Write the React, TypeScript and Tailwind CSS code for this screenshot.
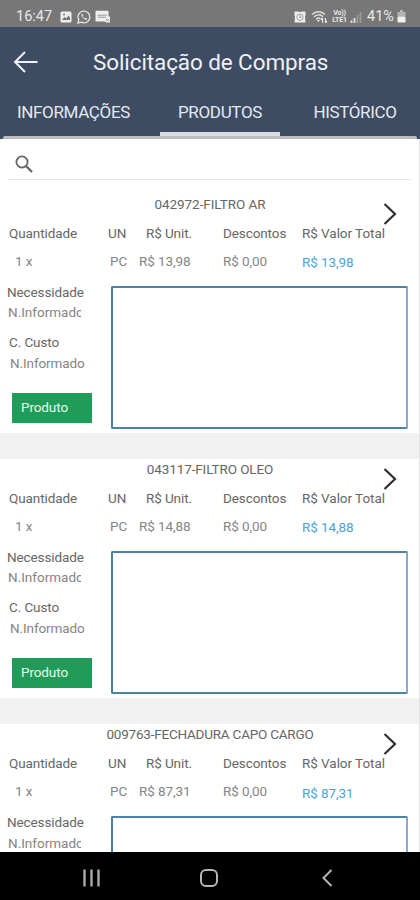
import { ReactNode } from "react";
import clsx from "clsx";

interface Item {
    code: string;
    price: string;
    titleClass: string;
}

const items: Item[] = [
    { code: "042972-FILTRO AR", price: "R$ 13,98", titleClass: "tracking-[-0.05px]" },
    { code: "043117-FILTRO OLEO", price: "R$ 14,88", titleClass: "tracking-[-0.1px]" },
    { code: "009763-FECHADURA CAPO CARGO", price: "R$ 87,31", titleClass: "tracking-[-0.22px]" },
];

function StatusBar() {
    return (
        <div className="flex h-[27px] shrink-0 items-center bg-[#777777] pt-[6px] pl-[16px] text-[#e9e9e9]">
            <span className="w-[44px] pt-[2px] text-[14.5px] leading-none">16:47</span>
            {/* Gallery */}
            <svg className="h-[12px] w-[12px]" viewBox="0 0 12 12">
                <rect x="0.5" y="0.5" width="11" height="11" rx="1.5" fill="#eeeeee" />
                <path d="M2 9 L4.5 5.8 L6.2 7.6 L8.6 4.6 L10 6.5 V9 Z" fill="#777777" />
                <circle cx="4" cy="3.6" r="1" fill="#777777" />
            </svg>
            {/* WhatsApp */}
            <svg className="ml-[5px] h-[14px] w-[14px]" viewBox="0 0 14 14" fill="none">
                <path
                    d="M0.9 13.1 L1.8 9.9 A5.9 5.9 0 1 1 4.2 12.2 Z"
                    stroke="#e6e6e6"
                    strokeWidth="1.3"
                />
                <path
                    d="M4.6 4 C4 6.8 7.2 10.2 10 9.6 L9.9 8.3 L8.4 7.7 L7.7 8.4 C6.8 8 6 7.2 5.6 6.3 L6.3 5.6 L5.7 4 Z"
                    fill="#e6e6e6"
                />
            </svg>
            {/* Message */}
            <svg className="ml-[4px] h-[13px] w-[16px]" viewBox="0 0 16 13">
                <path d="M0.5 0.8 H13.5 V6.5 H15 V12.5 H11 L10 11.5 H0.5 Z" fill="#eeeeee" />
                <path d="M2.5 5.2 H12 M3 7.2 H11" stroke="#999999" strokeWidth="1" />
                <path d="M11 9 L12.6 10.8 L14 9.2" stroke="#888888" fill="none" />
            </svg>
            <div className="ml-auto flex items-center pr-[14px]">
                {/* Alarm */}
                <svg className="h-[12px] w-[12px]" viewBox="0 0 12 12">
                    <path
                        d="M0.5 0.5 H3.5 L6 1 L8.5 0.5 H11.5 V4 L11 6 L11.5 11.5 H0.5 L1 6 L0.5 4 Z"
                        fill="#eeeeee"
                    />
                    <circle cx="6" cy="6.2" r="3.2" fill="none" stroke="#999999" strokeWidth="0.9" />
                    <path d="M6 4.3 V6.4 H7.5" stroke="#888888" fill="none" />
                </svg>
                {/* Wifi */}
                <svg className="ml-[5px] h-[14px] w-[17px]" viewBox="0 0 17 14" fill="none">
                    <path
                        d="M1 4.5 C4.5 0.8 10.5 0.8 14 4.5 M3 7 C5.7 4.2 9.5 4.2 12 6.8 M5.2 9.2 C6.6 7.8 8.2 7.8 9.5 9"
                        stroke="#dddddd"
                        strokeWidth="1.5"
                    />
                    <path d="M7.4 12 L5.8 10 H9 Z" fill="#eeeeee" />
                    <path
                        d="M11.5 12.8 V8 M10 9.6 L11.5 8 M14.5 8 V12.8 M16 11.2 L14.5 12.8"
                        stroke="#eeeeee"
                        strokeWidth="1.2"
                    />
                </svg>
                <span className="ml-[3px] w-[17px] text-center text-[7px] leading-[7px] font-bold tracking-[-0.2px]">
                    Vo))
                    <br />
                    LTE1
                </span>
                {/* Signal */}
                <svg className="ml-[2px] h-[12px] w-[12px]" viewBox="0 0 12 12">
                    <path d="M1.5 9.5 V12 M4.5 7 V12" stroke="#e0e0e0" strokeWidth="1.8" />
                    <path d="M7.5 4 V12 M10.5 1 V12" stroke="#9a9a9a" strokeWidth="1.8" />
                </svg>
                <span className="ml-[5px] w-[28px] pt-[2px] text-[14.5px] leading-none">41%</span>
                {/* Battery */}
                <svg className="ml-[2px] h-[13px] w-[9px]" viewBox="0 0 9 13">
                    <path d="M3 0 H6 V2 H8.5 V6.5 H0.5 V2 H3 Z" fill="#b4b4b4" />
                    <rect x="0.5" y="6.5" width="8" height="6" rx="1" fill="#f2f2f2" />
                </svg>
            </div>
        </div>
    );
}

function Tab({ children, className }: { children: ReactNode; className: string }) {
    return (
        <button
            type="button"
            className={clsx(
                "flex h-[50px] shrink-0 items-center justify-center border-b-[4px] pt-[7px] text-[17px] tracking-[-0.35px] whitespace-nowrap text-[#e4e9ef]",
                className
            )}
        >
            {children}
        </button>
    );
}

function Header() {
    return (
        <div className="h-[112px] shrink-0 bg-[#3d4c63]">
            <div className="flex h-[59px] items-center pt-[11px] pl-[13px]">
                <svg className="h-[24px] w-[26px]" viewBox="0 0 26 24" fill="none">
                    <path d="M24.5 12 H2 M12 2 L2 12 L12 22" stroke="#eef1f5" strokeWidth="2" />
                </svg>
                <h1 className="ml-[54px] text-[22.5px] leading-none tracking-[-0.1px] whitespace-nowrap text-[#eef1f5]">
                    Solicitação de Compras
                </h1>
            </div>
            <div className="flex">
                <Tab className="w-[147px] border-transparent">INFORMAÇÕES</Tab>
                <Tab className="ml-[13px] w-[120px] border-[#d5dce2]">PRODUTOS</Tab>
                <Tab className="ml-[10px] w-[130px] border-transparent">HISTÓRICO</Tab>
            </div>
            <div className="mx-[3px] h-[3px] rounded-t-[2px] bg-[#b9bdbf]" />
        </div>
    );
}

function Search() {
    return (
        <div className="h-[54.5px] shrink-0">
            <div className="mx-[8px] flex h-[41px] items-center border-b border-[#e8e8e8] pt-[9px] pl-[7px]">
                <svg className="h-[18px] w-[18px]" viewBox="0 0 18 18" fill="none" stroke="#666666">
                    <circle cx="7" cy="7" r="5.6" strokeWidth="1.8" />
                    <path d="M11 11 L17 17" strokeWidth="2.3" />
                </svg>
            </div>
        </div>
    );
}

function ItemCard({ item }: { item: Item }) {
    return (
        <div className="h-[265.4px] shrink-0">
            <div className="relative flex h-[30px] justify-center pt-[2px] pl-[1px]">
                <h2 className={clsx("text-[13.5px] leading-[17px] text-[#666666]", item.titleClass)}>
                    {item.code}
                </h2>
                <svg
                    className="absolute top-[8px] right-[21px] h-[24px] w-[16px]"
                    viewBox="0 0 16 24"
                    fill="none"
                >
                    <path d="M2.5 2 L13 12 L2.5 22" stroke="#2e2e2e" strokeWidth="2.2" />
                </svg>
            </div>

            <div className="flex h-[62px] pt-[1px] text-[13.5px] leading-[17px] tracking-[-0.1px] whitespace-nowrap text-[#666666]">
                <div className="w-[108px] pl-[9px]">
                    <div>Quantidade</div>
                    <div className="mt-[11px] pl-[6px] text-[#858585]">1 x</div>
                </div>
                <div className="w-[31px]">
                    <div>UN</div>
                    <div className="mt-[11px] pl-[2px] text-[#858585]">PC</div>
                </div>
                <div className="w-[84px]">
                    <div className="pl-[7px]">R$ Unit.</div>
                    <div className="mt-[11px] text-[#858585]">{item.price}</div>
                </div>
                <div className="w-[79px]">
                    <div>Descontos</div>
                    <div className="mt-[11px] text-[#858585]">R$ 0,00</div>
                </div>
                <div>
                    <div className="tracking-[-0.05px]">R$ Valor Total</div>
                    <div className="mt-[12.5px] text-[#4ba3dc]">{item.price}</div>
                </div>
            </div>

            <div className="flex h-[147.5px]">
                <div className="w-[111px] pl-[7px] text-[13.5px] leading-[17px] tracking-[-0.1px] text-[#666666]">
                    <div className="mt-[-2px]">Necessidade</div>
                    <div className="mt-[3.5px] w-[74px] overflow-hidden pl-[1px] tracking-normal whitespace-nowrap text-[#858585]">
                        N.Informado
                    </div>
                    <div className="mt-[13px] pl-[2px]">C. Custo</div>
                    <div className="mt-[3.5px] pl-[3px] text-[#858585]">N.Informado</div>
                    <button
                        type="button"
                        className="mt-[21px] ml-[5px] flex h-[30px] w-[80px] items-center bg-[#1f9d58] pl-[9px] text-[13.5px] text-[#e8f7ee]"
                    >
                        Produto
                    </button>
                </div>
                <div className="h-[143px] w-[297px] rounded-[2px] border-2 border-[#4d81a6] border-r-[#8aa8cc]" />
            </div>

            <div className="h-[25.9px] bg-[#f1f1f1]" />
        </div>
    );
}

function NavBar() {
    return (
        <div className="flex h-[48px] shrink-0 items-center bg-black pt-[3px] pl-[83px]">
            <svg className="h-[18px] w-[18px]" viewBox="0 0 18 18">
                <path d="M1.5 0.5 V17.5 M8.5 0.5 V17.5 M15.5 0.5 V17.5" stroke="#a8a8a8" strokeWidth="2.4" />
            </svg>
            <svg className="ml-[98px] h-[20px] w-[20px]" viewBox="0 0 20 20">
                <rect x="2" y="2" width="16" height="16" rx="5" fill="none" stroke="#b5b5b5" strokeWidth="2" />
            </svg>
            <svg className="ml-[102px] h-[20px] w-[12px]" viewBox="0 0 12 20">
                <path d="M10.5 2 L2.5 10 L10.5 18" fill="none" stroke="#b5b5b5" strokeWidth="2" />
            </svg>
        </div>
    );
}

export default function App() {
    return (
        <div className="flex h-[900px] w-[420px] flex-col overflow-hidden bg-white font-['Roboto',sans-serif]">
            <StatusBar />
            <Header />
            <div className="flex flex-1 flex-col overflow-hidden border-r border-[#e3e3e3]">
                <Search />
                {items.map((item) => (
                    <ItemCard key={item.code} item={item} />
                ))}
            </div>
            <NavBar />
        </div>
    );
}
